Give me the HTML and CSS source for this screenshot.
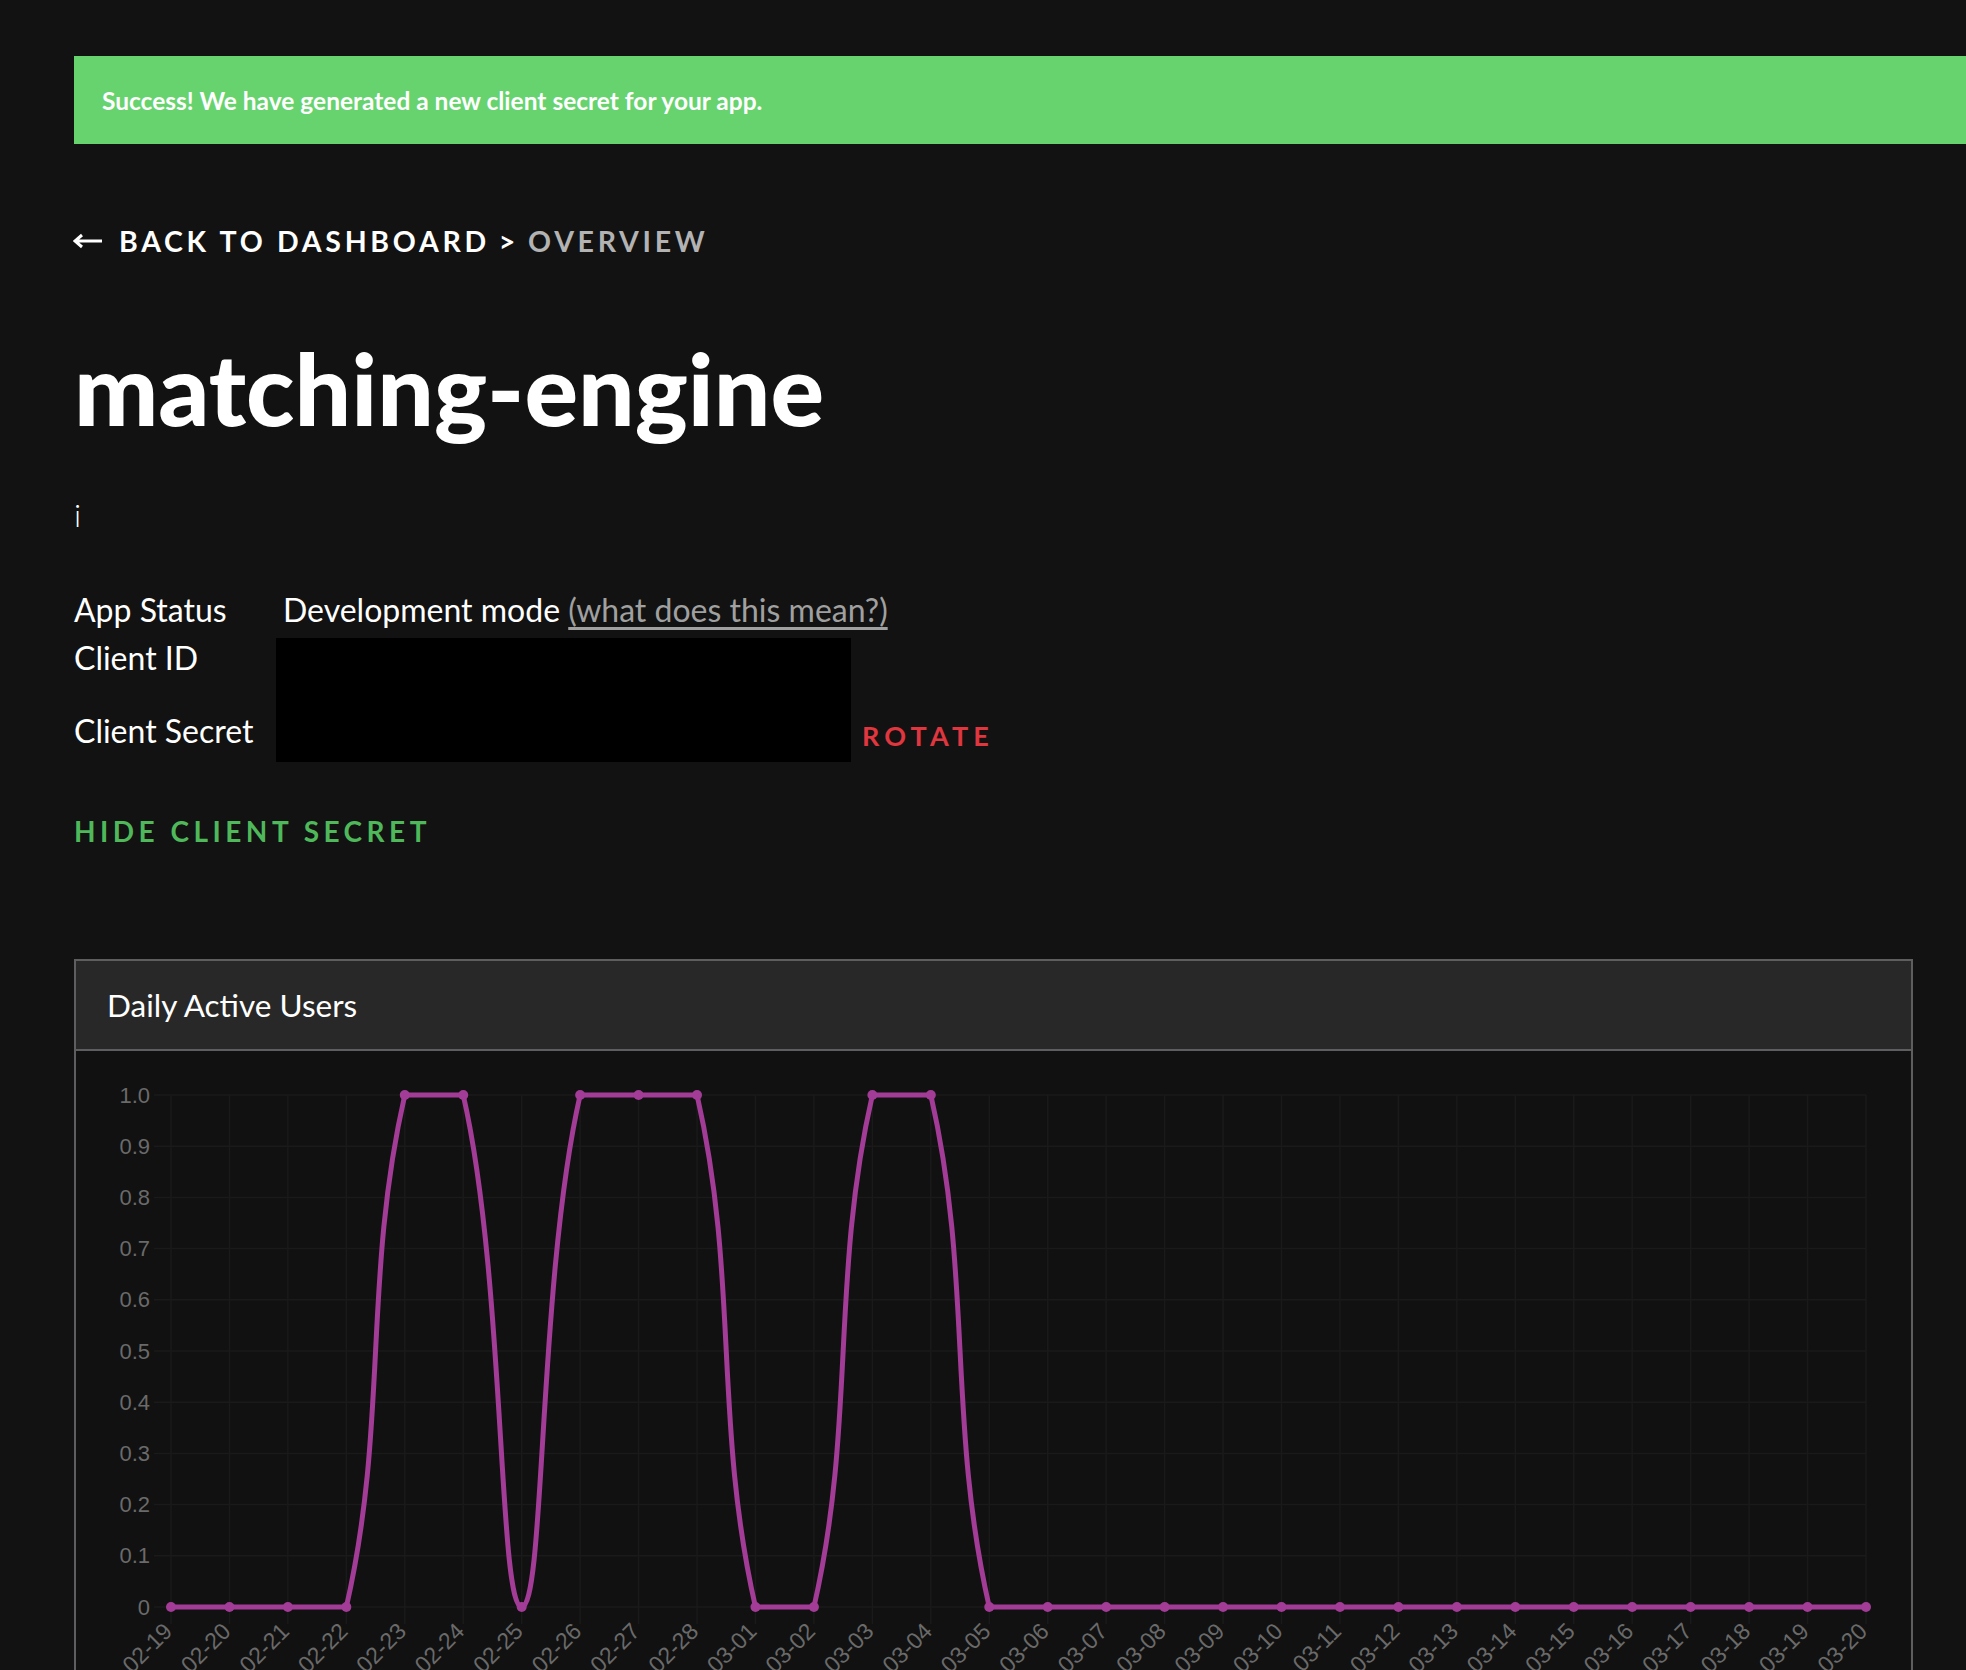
FILE: index.html
```html
<!DOCTYPE html>
<html lang="en">
<head>
<meta charset="utf-8">
<title>matching-engine</title>
<link rel="stylesheet" href="styles.css">
</head>
<body>
<div class="page">
  <div class="alert">Success! We have generated a new client secret for your app.</div>

  <nav class="crumbs">
    <a class="back" href="#">
      <svg class="arrow" viewBox="0 0 30 16" aria-hidden="true"><path d="M2 8H29M9 2L2 8L9 14" fill="none" stroke="#fff" stroke-width="3"/></svg>
      <span>BACK TO DASHBOARD</span>
    </a>
    <span class="sep">&gt;</span>
    <span class="current">OVERVIEW</span>
  </nav>

  <h1 class="title">matching-engine</h1>
  <p class="desc">i</p>

  <div class="info">
    <div class="label">App Status</div>
    <div class="value">Development mode <a class="help" href="#">(what does this mean?)</a></div>
    <div class="label">Client ID</div>
    <div class="redact"></div>
    <div class="label label-secret">Client Secret</div>
    <button class="rotate">ROTATE</button>
  </div>

  <button class="toggle">HIDE CLIENT SECRET</button>

  <section class="panel">
    <header class="panel-head">Daily Active Users</header>
    <div class="panel-body">
      <svg class="chart" width="1835" height="650" viewBox="0 0 1835 650">
        <g class="grid">
          <path d="M78 556H1790M78 504.8H1790M78 453.6H1790M78 402.4H1790M78 351.2H1790M78 300H1790M78 248.8H1790M78 197.6H1790M78 146.4H1790M78 95.2H1790M78 44H1790"/>
          <path d="M95 44V573M153.45 44V573M211.9 44V573M270.34 44V573M328.79 44V573M387.24 44V573M445.69 44V573M504.14 44V573M562.58 44V573M621.03 44V573M679.48 44V573M737.93 44V573M796.38 44V573M854.82 44V573M913.27 44V573M971.72 44V573M1030.17 44V573M1088.62 44V573M1147.06 44V573M1205.51 44V573M1263.96 44V573M1322.41 44V573M1380.86 44V573M1439.3 44V573M1497.75 44V573M1556.2 44V573M1614.65 44V573M1673.1 44V573M1731.54 44V573M1790 44V573"/>
        </g>
        <g class="ylabels">
          <text x="74" y="44">1.0</text>
          <text x="74" y="95.2">0.9</text>
          <text x="74" y="146.4">0.8</text>
          <text x="74" y="197.6">0.7</text>
          <text x="74" y="248.8">0.6</text>
          <text x="74" y="300">0.5</text>
          <text x="74" y="351.2">0.4</text>
          <text x="74" y="402.4">0.3</text>
          <text x="74" y="453.6">0.2</text>
          <text x="74" y="504.8">0.1</text>
          <text x="74" y="556">0</text>
        </g>
        <g class="xlabels">
          <text transform="translate(92 576) rotate(-45)">02-19</text>
          <text transform="translate(150.45 576) rotate(-45)">02-20</text>
          <text transform="translate(208.9 576) rotate(-45)">02-21</text>
          <text transform="translate(267.34 576) rotate(-45)">02-22</text>
          <text transform="translate(325.79 576) rotate(-45)">02-23</text>
          <text transform="translate(384.24 576) rotate(-45)">02-24</text>
          <text transform="translate(442.69 576) rotate(-45)">02-25</text>
          <text transform="translate(501.14 576) rotate(-45)">02-26</text>
          <text transform="translate(559.58 576) rotate(-45)">02-27</text>
          <text transform="translate(618.03 576) rotate(-45)">02-28</text>
          <text transform="translate(676.48 576) rotate(-45)">03-01</text>
          <text transform="translate(734.93 576) rotate(-45)">03-02</text>
          <text transform="translate(793.38 576) rotate(-45)">03-03</text>
          <text transform="translate(851.82 576) rotate(-45)">03-04</text>
          <text transform="translate(910.27 576) rotate(-45)">03-05</text>
          <text transform="translate(968.72 576) rotate(-45)">03-06</text>
          <text transform="translate(1027.17 576) rotate(-45)">03-07</text>
          <text transform="translate(1085.62 576) rotate(-45)">03-08</text>
          <text transform="translate(1144.06 576) rotate(-45)">03-09</text>
          <text transform="translate(1202.51 576) rotate(-45)">03-10</text>
          <text transform="translate(1260.96 576) rotate(-45)">03-11</text>
          <text transform="translate(1319.41 576) rotate(-45)">03-12</text>
          <text transform="translate(1377.86 576) rotate(-45)">03-13</text>
          <text transform="translate(1436.3 576) rotate(-45)">03-14</text>
          <text transform="translate(1494.75 576) rotate(-45)">03-15</text>
          <text transform="translate(1553.2 576) rotate(-45)">03-16</text>
          <text transform="translate(1611.65 576) rotate(-45)">03-17</text>
          <text transform="translate(1670.1 576) rotate(-45)">03-18</text>
          <text transform="translate(1728.54 576) rotate(-45)">03-19</text>
          <text transform="translate(1787 576) rotate(-45)">03-20</text>
        </g>
        <path class="line" d="M95 556L270.34 556C312.34 372.1 286.79 227.9 328.79 44L387.24 44C429.24 227.9 422.29 556 445.69 556C469.09 556 462.14 227.9 504.14 44L621.03 44C663.03 227.9 637.48 372.1 679.48 556L737.93 556C779.93 372.1 754.38 227.9 796.38 44L854.82 44C896.82 227.9 871.27 372.1 913.27 556L1790 556"/>
        <g class="dots">
          <circle cx="95" cy="556" r="5"/>
          <circle cx="153.45" cy="556" r="5"/>
          <circle cx="211.9" cy="556" r="5"/>
          <circle cx="270.34" cy="556" r="5"/>
          <circle cx="328.79" cy="44" r="5"/>
          <circle cx="387.24" cy="44" r="5"/>
          <circle cx="445.69" cy="556" r="5"/>
          <circle cx="504.14" cy="44" r="5"/>
          <circle cx="562.58" cy="44" r="5"/>
          <circle cx="621.03" cy="44" r="5"/>
          <circle cx="679.48" cy="556" r="5"/>
          <circle cx="737.93" cy="556" r="5"/>
          <circle cx="796.38" cy="44" r="5"/>
          <circle cx="854.82" cy="44" r="5"/>
          <circle cx="913.27" cy="556" r="5"/>
          <circle cx="971.72" cy="556" r="5"/>
          <circle cx="1030.17" cy="556" r="5"/>
          <circle cx="1088.62" cy="556" r="5"/>
          <circle cx="1147.06" cy="556" r="5"/>
          <circle cx="1205.51" cy="556" r="5"/>
          <circle cx="1263.96" cy="556" r="5"/>
          <circle cx="1322.41" cy="556" r="5"/>
          <circle cx="1380.86" cy="556" r="5"/>
          <circle cx="1439.3" cy="556" r="5"/>
          <circle cx="1497.75" cy="556" r="5"/>
          <circle cx="1556.2" cy="556" r="5"/>
          <circle cx="1614.65" cy="556" r="5"/>
          <circle cx="1673.1" cy="556" r="5"/>
          <circle cx="1731.54" cy="556" r="5"/>
          <circle cx="1790" cy="556" r="5"/>
        </g>
      </svg>
    </div>
  </section>
</div>
</body>
</html>
```

FILE: styles.css
```css
* { box-sizing: border-box; }
html, body { margin: 0; padding: 0; }
body {
  background: #121212;
  color: #fff;
  font-family: Lato, "Noto Sans", sans-serif;
  width: 1966px;
  height: 1670px;
  overflow: hidden;
}
.page { padding: 56px 0 0 74px; }

.alert {
  height: 88px;
  background: #66d36e;
  color: #fff;
  font-size: 24.5px;
  font-weight: 700;
  display: flex;
  align-items: center;
  padding-left: 28px;
}

.crumbs {
  margin-top: 77px;
  height: 40px;
  display: flex;
  align-items: center;
  font-size: 28.5px;
  line-height: 40px;
  font-weight: 700;
  letter-spacing: 0.13em;
}
.back { color: #fff; text-decoration: none; display: flex; align-items: center; }
.arrow { width: 30px; height: 16px; margin-left: -1px; margin-right: 16px; }
.sep { margin-left: 9px; margin-right: 9px; }
.current { color: #b3b3b3; }

.title {
  margin: 76px 0 0;
  font-size: 100px;
  line-height: 100px;
  font-weight: 900;
  letter-spacing: 0;
}

.desc {
  margin: 58px 0 0;
  font-size: 32px;
  line-height: 40px;
  font-weight: 300;
}

.info {
  margin-top: 55px;
  display: grid;
  grid-template-columns: 202px 575px auto;
  grid-template-rows: 48px 48px 76px;
  font-size: 32px;
  line-height: 40px;
  font-weight: 400;
}
.label { grid-column: 1; }
.value { grid-column: 2 / 4; padding-left: 7px; }
.help { color: #a0a0a0; text-decoration: underline; text-decoration-color: #a0a0a0; text-underline-offset: 5px; }
.redact { grid-column: 2; grid-row: 2 / 4; background: #000; }
.label-secret { grid-row: 3; padding-top: 25px; }
.rotate {
  grid-column: 3;
  grid-row: 3;
  align-self: start;
  justify-self: start;
  margin: 30px 0 0 11px;
  padding: 0;
  background: none;
  border: 0;
  font-family: inherit;
  font-size: 27px;
  line-height: 40px;
  font-weight: 700;
  letter-spacing: 0.19em;
  color: #e0363f;
}

.toggle {
  display: block;
  margin-top: 49px;
  padding: 0;
  background: none;
  border: 0;
  font-family: inherit;
  font-size: 28px;
  line-height: 40px;
  font-weight: 700;
  letter-spacing: 0.16em;
  color: #4fb85a;
}

.panel {
  margin: 108px 53px 0 0;
  border: 2px solid #5e5e60;
}
.panel-head {
  height: 90px;
  background: #282828;
  border-bottom: 2px solid #5e5e60;
  padding-left: 31px;
  display: flex;
  align-items: center;
  font-size: 31.5px;
  font-weight: 400;
}
.panel-body { background: #111; height: 650px; }
.chart { display: block; }
.grid path { stroke: #1a1a1a; stroke-width: 1.5; fill: none; }
.ylabels text {
  font-family: "Liberation Sans", Arial, sans-serif;
  font-size: 22px;
  fill: #6a6a6a;
  text-anchor: end;
  dominant-baseline: central;
}
.xlabels text {
  font-family: "Liberation Sans", Arial, sans-serif;
  font-size: 23px;
  fill: #6a6a6a;
  text-anchor: end;
  dominant-baseline: central;
}
.line { fill: none; stroke: #a33c97; stroke-width: 5; }
.dots circle { fill: #a33c97; }
```
